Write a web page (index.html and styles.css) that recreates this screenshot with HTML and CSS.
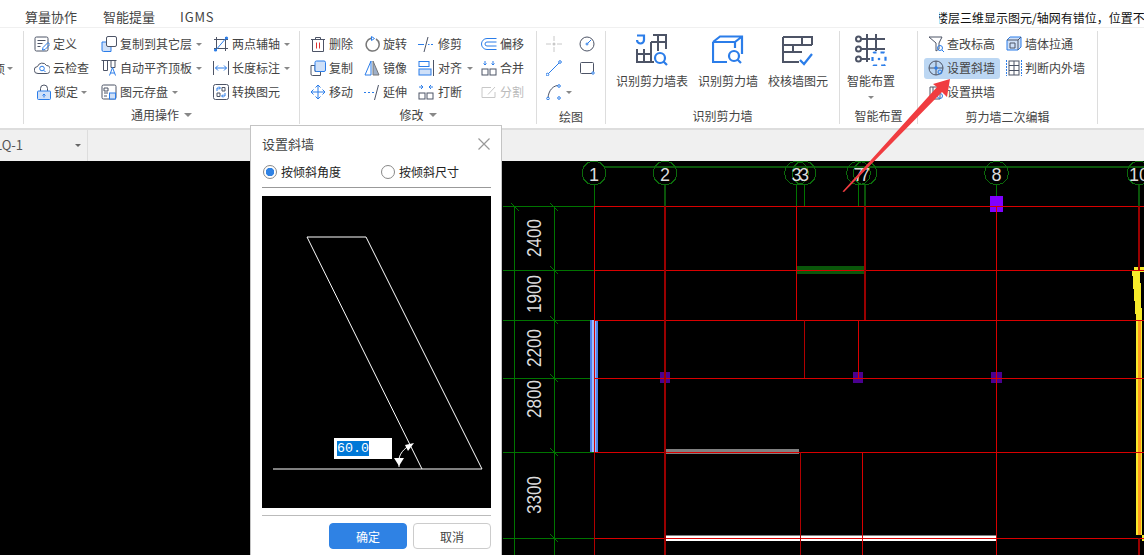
FILE: index.html
```html
<!DOCTYPE html>
<html lang="zh-CN">
<head>
<meta charset="utf-8">
<title>设置斜墙</title>
<link rel="stylesheet" href="styles.css">
</head>
<body>
<div class="app">
  <header class="menu">
    <span class="tab">算量协作</span>
    <span class="tab">智能提量</span>
    <span class="tab latin">IGMS</span>
    <div class="notice"><span>楼层三维显示图元/轴网有错位，位置不对</span></div>
  </header>

  <section class="ribbon">
    <div class="group stub">
      <div class="stub-row"><span>项</span><i class="caret"></i></div>
    </div>

    <div class="group g-common">
      <div class="tools t-common">
        <div class="item"><svg class="ic" viewBox="0 0 16 16"><rect x="1" y="1" width="13" height="14" rx="1.500"/><path d="M3.500 4.500h8M3.500 7.500h5M3.500 10.500h3"/><path class="bl" d="M8.500 14l.5-2.500 5-5 2 2-5 5z"/></svg><span>定义</span></div>
        <div class="item"><svg class="ic" viewBox="0 0 16 16"><path d="M4 13.500a3.500 3.500 0 0 1-.5-7A5 5 0 0 1 12.500 5.500a4 4 0 0 1-.5 8z"/><circle class="bl" cx="8" cy="8.500" r="2.300"/><path class="bl" d="M9.700 10.200l1.800 1.800"/></svg><span>云检查</span></div>
        <div class="item nudge"><svg class="ic" viewBox="0 0 16 16"><path d="M4.500 7V4.500a3.500 3.500 0 0 1 7 0V7"/><rect class="bl fb" x="1.500" y="7" width="13" height="8.500" rx="1"/><path class="bl" d="M8 13.500v-3M6.500 11.500L8 10l1.500 1.500"/></svg><span>锁定</span><i class="caret"></i></div>

        <div class="item"><svg class="ic" viewBox="0 0 16 16"><path class="bl fb" d="M1 6h9v9.500H2.500A1.500 1.500 0 0 1 1 14z"/><rect class="fw" x="5.500" y="0.500" width="10" height="10" rx="1.500"/></svg><span>复制到其它层</span><i class="caret"></i></div>
        <div class="item"><svg class="ic" viewBox="0 0 16 16"><path d="M0.500 0.500h15M2.500 0.500v10h4v-10M10 0.500v7h4v-7"/><path class="bl" d="M8.500 15.500l3-8 3 8M9.500 13h4"/></svg><span>自动平齐顶板</span><i class="caret"></i></div>
        <div class="item"><svg class="ic" viewBox="0 0 16 16"><rect x="1" y="1" width="14" height="14" rx="1.500"/><path d="M3 4h4v3H3zM3 9h4M3 12h3"/><rect class="bl fb" x="8.500" y="9" width="6" height="6"/></svg><span>图元存盘</span><i class="caret"></i></div>

        <div class="item"><svg class="ic" viewBox="0 0 16 16"><path d="M1 3.500h14M1 12.500h14M3.500 1v14M12.500 1v14"/><path class="bl" d="M2 15L14 1"/><circle class="dot" cx="2.500" cy="14" r="1.600"/><circle class="dot" cx="13.500" cy="2" r="1.600"/></svg><span>两点辅轴</span><i class="caret"></i></div>
        <div class="item"><svg class="ic" viewBox="0 0 16 16"><path d="M0.500 1v14M15.500 1v14"/><path class="bl" d="M2.500 8h11M5 5.500L2.500 8 5 10.500M11 5.500L13.500 8 11 10.500"/></svg><span>长度标注</span><i class="caret"></i></div>
        <div class="item"><svg class="ic" viewBox="0 0 16 16"><rect x="0.500" y="0.500" width="15" height="15" rx="2"/><path class="bl" d="M4 7V4h3M6 2.500L7.500 4 6 5.500M12 9v3H9M10 13.500L8.500 12l1.500-1.500"/><path d="M9 3.500h3V7H9zM4 9h3v3.500H4z"/></svg><span>转换图元</span></div>
      </div>
      <div class="glabel up">通用操作<i class="caret big"></i></div>
    </div>

    <div class="group g-edit">
      <div class="tools t-edit">
        <div class="item"><svg class="ic" viewBox="0 0 16 16"><path d="M1 3.500h14M5.500 3.500v-2h5v2M2.500 3.500v12h11v-12"/><path class="rd" d="M6.500 6.500v6M9.500 6.500v6"/></svg><span>删除</span></div>
        <div class="item"><svg class="ic" viewBox="0 0 16 16"><path d="M1 5.500h4v6h5.500v4H2.500A1.500 1.500 0 0 1 1 14z"/><rect class="bl fl" x="5" y="1" width="10.500" height="10.500" rx="1.500"/></svg><span>复制</span></div>
        <div class="item"><svg class="ic" viewBox="0 0 16 16"><path class="bl" d="M8 1v14M8 1L5.500 3.500M8 1l2.500 2.500M8 15l-2.500-2.500M8 15l2.500-2.500M1 8h14M1 8l2.500-2.500M1 8l2.500 2.500M15 8l-2.500-2.500M15 8l-2.500 2.500"/></svg><span>移动</span></div>

        <div class="item"><svg class="ic" viewBox="0 0 16 16"><path class="gl" d="M7 2.300A6.500 6.500 0 1 0 12 3"/><path class="bl" d="M7.500 0.500l3 2-3 2z"/></svg><span>旋转</span></div>
        <div class="item"><svg class="ic" viewBox="0 0 16 16"><path class="bl" d="M7 1L1 15h6z"/><path d="M9 1l6 14H9z" class="gf"/></svg><span>镜像</span></div>
        <div class="item"><svg class="ic" viewBox="0 0 16 16"><path class="bl" d="M0 8.500h2M4 8.500h2M8 8.500h2"/><path d="M14.500 1L10.500 16"/></svg><span>延伸</span></div>

        <div class="item gap4"><svg class="ic" viewBox="0 0 16 16"><path class="bl" d="M0 8.500h6M10 8.500h1.500M13 8.500h2"/><path d="M10 1L6 16"/></svg><span>修剪</span></div>
        <div class="item gap4"><svg class="ic" viewBox="0 0 16 16"><rect class="bl" x="1" y="1.500" width="10" height="5"/><rect class="bl fb" x="1" y="9" width="12" height="6"/><path d="M15.500 0v16"/></svg><span>对齐</span><i class="caret"></i></div>
        <div class="item gap4"><svg class="ic" viewBox="0 0 16 16"><rect x="1" y="9" width="6" height="6"/><rect x="9" y="9" width="6" height="6"/><path class="bl" d="M1 3h3.500M3 1l2 2-2 2M15 3h-3.500M13 1l-2 2 2 2"/></svg><span>打断</span></div>

        <div class="item"><svg class="ic" viewBox="0 0 16 16"><path class="bl" d="M15.500 2.500H6a5.500 5.500 0 0 0 0 11h9.500M15.500 6H6a2 2 0 0 0 0 4h9.500"/></svg><span>偏移</span></div>
        <div class="item"><svg class="ic" viewBox="0 0 16 16"><rect x="1" y="9" width="6" height="6"/><rect x="9" y="9" width="6" height="6"/><path class="bl" d="M4 1v4M2.500 3.500L4 5l1.500-1.500M12 1v4M10.500 3.500L12 5l1.500-1.500"/></svg><span>合并</span></div>
        <div class="item off"><svg class="ic" viewBox="0 0 16 16"><path class="lg" d="M10 3.500H1v10h13V8M7 10.500L14 3"/></svg><span>分割</span></div>
      </div>
      <div class="glabel up">修改<i class="caret big"></i></div>
    </div>

    <div class="group g-draw">
      <div class="tools t-draw">
        <div class="item"><svg class="ic" viewBox="0 0 16 16"><path class="lg" d="M0 8h5M11 8h5M8 0v5M8 11v5"/><circle class="lgf" cx="8" cy="8" r="1.500"/></svg></div>
        <div class="item"><svg class="ic" viewBox="0 0 16 16"><path class="bl" d="M1 15L14 2"/><circle class="bl fw" cx="1.500" cy="14.500" r="1.300"/><circle class="bl fw" cx="14" cy="2" r="1.300"/></svg></div>
        <div class="item"><svg class="ic" viewBox="0 0 16 16"><path d="M2 15C2 6 8 1 13 1.500"/><circle class="bl fw" cx="2" cy="14.500" r="1.300"/><circle class="bl fw" cx="13" cy="2" r="1.300"/><circle class="bl fw" cx="13" cy="14" r="1.300"/></svg><i class="caret"></i></div>
        <div class="item"><svg class="ic" viewBox="0 0 16 16"><circle cx="8" cy="8" r="7"/><path class="bl" d="M8 8l4-4"/><circle class="bl fw" cx="8" cy="8" r="1"/></svg></div>
        <div class="item"><svg class="ic" viewBox="0 0 16 16"><rect x="1.500" y="2.500" width="13" height="11" rx="1"/><circle class="bl fw" cx="14" cy="13" r="1.200"/></svg></div>
      </div>
      <div class="glabel">绘图</div>
    </div>

    <div class="group g-shear">
      <div class="bigs">
        <div class="big-btn"><svg class="lic" viewBox="0 0 32 32"><path d="M17 1H30V15M22 1V17M15 8H30M15 8V28M1 20H15M1 15V28H18M8 15V28"/><path class="bl2" d="M1 1.500H8V6A3.500 3.500 0 0 1 1 6"/><circle class="bl2" cx="24" cy="24" r="5"/><path class="bl2" d="M27.500 27.500L31 31"/></svg><span>识别剪力墙表</span></div>
        <div class="big-btn"><svg class="lic" viewBox="0 0 32 32"><path class="bl2" d="M1 8L8 2.500H30V20M1 8H23V14M23 8L30 2.500M1 8V28H15"/><circle class="bl2" cx="22" cy="22" r="5"/><path class="bl2" d="M25.500 25.500L29 29"/></svg><span>识别剪力墙</span></div>
        <div class="big-btn"><svg class="lic" viewBox="0 0 32 32"><path d="M1 3H30V11M1 11H30M20 3V11M11 11V18M1 18H20M1 3V28H17"/><path class="bl2" d="M18 26L22 30L30 20"/></svg><span>校核墙图元</span></div>
      </div>
      <div class="glabel">识别剪力墙</div>
    </div>

    <div class="group g-smart">
      <div class="bigs">
        <div class="big-btn"><svg class="lic" viewBox="0 0 32 32"><path d="M4 5H30M4 15H30M4 25H15M12 0V28M21 0V17"/><circle class="fw" cx="3.500" cy="5" r="2.500"/><circle class="fw" cx="3.500" cy="15" r="2.500"/><circle class="fw" cx="3.500" cy="25" r="2.500"/><rect class="bl2 dash" x="17.500" y="18.500" width="13" height="13" rx="2"/><circle class="dot" cx="24" cy="25" r="1.300"/></svg><span>智能布置</span><i class="caret lone"></i></div>
      </div>
      <div class="glabel">智能布置</div>
    </div>

    <div class="group g-second">
      <div class="tools t-second">
        <div class="item"><svg class="ic" viewBox="0 0 16 16"><path d="M1 1h13L11 7v6L8 15V7z"/><circle class="bl" cx="12" cy="12" r="2.500"/><path class="bl" d="M14 14l2 2"/></svg><span>查改标高</span></div>
        <div class="item sel"><svg class="ic" viewBox="0 0 16 16"><circle cx="8" cy="8" r="7"/><path d="M8 1v14M1 8h14"/><circle class="dot" cx="8" cy="8" r="1.700"/><circle class="bl" cx="12" cy="12" r="2"/></svg><span>设置斜墙</span></div>
        <div class="item"><svg class="ic" viewBox="0 0 16 16"><path d="M2 3h10v12H2zM5 3v12"/><circle class="bl" cx="12" cy="12" r="2.500"/></svg><span>设置拱墙</span></div>
        <div class="item"><svg class="ic" viewBox="0 0 16 16"><path class="bl fb" d="M1 4l3-3h11v10l-3 3H1z"/><path d="M1 4h11v10M12 4l3-3M4 7h5v5H4z"/></svg><span>墙体拉通</span></div>
        <div class="item"><svg class="ic" viewBox="0 0 16 16"><rect x="3" y="1" width="10" height="14"/><path d="M3 5.500h10M3 10.500h10M8 1v14"/><path class="bl dash1" d="M0.500 0v16M15.500 0v16"/></svg><span>判断内外墙</span></div>
      </div>
      <div class="glabel">剪力墙二次编辑</div>
    </div>
  </section>

  <section class="bar">
    <div class="select"><span>LQ-1</span><i class="caret dark"></i></div>
  </section>

  <main class="stage">
    <svg class="cad" viewBox="0 161 1144 394">
      <defs>
        <polygon id="bub" points="12,0 10.400,6 6,10.400 0,12 -6,10.400 -10.400,6 -12,0 -10.400,-6 -6,-10.400 0,-12 6,-10.400 10.400,-6"/>
      </defs>

      <path class="dg2" d="M605 167H1144"/>
      <g class="bubbles">
        <use href="#bub" x="594" y="173"/><use href="#bub" x="665" y="173"/>
        <use href="#bub" x="796.500" y="173"/><use href="#bub" x="804" y="173"/>
        <use href="#bub" x="858.500" y="173"/><use href="#bub" x="865" y="173"/>
        <use href="#bub" x="996.500" y="173"/><use href="#bub" x="1139" y="173"/>
      </g>
      <path class="gn" d="M594.500 185V206M796.500 185V206M804.500 185V206M858.500 185V206M996.500 185V196"/>
      <path class="dg2" d="M665 185V206M865 185V206M1139 185V206"/>

      <path class="gn" d="M514.500 206V555M554.500 206V555M503 206.500H594M503 270.500H594M503 320.500H594M503 378.500H594M503 452.500H594M503 538.500H594"/>
      <path class="gn" d="M511 203l8 8M550 203l8 8M550 266l8 8M550 316l8 8M550 374l8 8M550 448l8 8M550 534l8 8"/>

      <rect class="dgb" x="797" y="266" width="68" height="8"/>
      <rect class="bw1" x="590" y="320" width="8" height="132"/>
      <rect class="bw2" x="592" y="320" width="4" height="132"/>
      <rect class="gy" x="665" y="449" width="134" height="5"/>
      <rect class="wh" x="665" y="535" width="331" height="6"/>
      <rect class="gy" x="665" y="535" width="331" height="1"/>
      <polygon class="ye" points="1132,270 1140,270 1142,320 1142,541 1144,541 1144,535 1136,535 1136,320"/>
      <rect class="ye" x="1134" y="267" width="10" height="5"/>
      <rect class="or" x="1138" y="320" width="3" height="215"/>

      <rect class="pu" x="990" y="196" width="13" height="16"/>
      <rect class="pd" x="660" y="372" width="10" height="11"/>
      <rect class="pd" x="853" y="372" width="10" height="11"/>
      <rect class="pd" x="991" y="372" width="11" height="11"/>

      <path class="rd1" d="M594 206.500H1144M594 270.500H1144M594 320.500H1144M594 378.500H1144M594 452.500H1144M594 538.500H1144"/>
      <path class="rd1" d="M594.500 206V452M796.500 206V320M858.500 320V378M996.500 206V555M862.500 452V555"/>
      <path class="rd2" d="M594.500 452V555M804.500 320V378M800.500 452V555"/>
      <path class="rd3" d="M665 206V555M865 206V320M1139 206V270M1139 538V555"/>

      <g class="nums">
        <text x="594" y="180.500">1</text><text x="665" y="180.500">2</text>
        <text x="796.500" y="180.500">3</text><text x="804" y="180.500">3</text>
        <text x="858.500" y="180.500">7</text><text x="865" y="180.500">7</text>
        <text x="996.500" y="180.500">8</text><text x="1139" y="180.500">10</text>
      </g>
      <g class="nums dims">
        <text transform="rotate(-90 541 238)" x="541" y="238" textLength="38" lengthAdjust="spacingAndGlyphs">2400</text>
        <text transform="rotate(-90 541 294)" x="541" y="294" textLength="38" lengthAdjust="spacingAndGlyphs">1900</text>
        <text transform="rotate(-90 541 348)" x="541" y="348" textLength="38" lengthAdjust="spacingAndGlyphs">2200</text>
        <text transform="rotate(-90 541 399)" x="541" y="399" textLength="38" lengthAdjust="spacingAndGlyphs">2800</text>
        <text transform="rotate(-90 541 495)" x="541" y="495" textLength="38" lengthAdjust="spacingAndGlyphs">3300</text>
      </g>
    </svg>
  </main>

  <aside class="dialog">
    <div class="d-title"><span>设置斜墙</span>
      <svg class="d-close" viewBox="0 0 12 12"><path d="M0.500 0.500l11 11M11.500 0.500l-11 11"/></svg>
    </div>
    <div class="d-radios">
      <label class="radio r-first"><i class="dot-r on"></i><span>按倾斜角度</span></label>
      <label class="radio"><i class="dot-r"></i><span>按倾斜尺寸</span></label>
    </div>
    <div class="preview">
      <svg class="pv" viewBox="262 196 229 312">
        <path class="wl" d="M307 237H366L482 469H273M307 237L422 469"/>
        <path class="wl" d="M410 445C404 449 400 453 399 459V467"/>
        <polygon class="wf" points="414,443 405,445 408,451"/>
        <polygon class="wf" points="394,458 404,458 399,466"/>
      </svg>
      <div class="angle"><span>60.0</span></div>
    </div>
    <div class="d-actions">
      <button class="btn primary">确定</button>
      <button class="btn">取消</button>
    </div>
  </aside>

  <svg class="pointer" viewBox="0 0 1144 555">
    <polygon points="842.500,191.500 937,87 933,84 950,79 947,97 942,92 844,192"/>
  </svg>
</div>
</body>
</html>
```
FILE: styles.css
```css
* { box-sizing: border-box; }
html, body { margin: 0; height: 100%; overflow: hidden; background: #fff; }
body { font-family: "Noto Sans CJK SC", "Liberation Sans", sans-serif; font-size: 12px; color: #444; }
.app { position: relative; width: 1144px; height: 555px; overflow: hidden; display: flex; flex-direction: column; }

.menu { flex: none; height: 28px; padding: 6px 0 0 25px; display: flex; align-items: center; gap: 26px; border-bottom: 1px solid #f0f0f0; }
.tab { font-size: 13px; color: #444; line-height: 20px; }
.tab.latin { letter-spacing: 0.800px; margin-left: -1px; }
.notice { margin-left: auto; width: 205px; overflow: hidden; white-space: nowrap; color: #111; margin-top: 3px; line-height: 16px; text-indent: -3px; }

.ribbon { flex: none; height: 102px; padding: 3px 0 4px; display: flex; border-bottom: 2px solid #ddd; }
.group { flex: none; display: flex; flex-direction: column; border-right: 1px solid #ddd; }
.stub { width: 24px; overflow: hidden; }
.stub-row { height: 24px; margin-top: 25px; display: flex; align-items: center; justify-content: flex-end; gap: 1px; padding-right: 10px; }
.g-common { width: 276px; }
.g-edit { width: 237px; }
.g-draw { width: 69px; }
.g-shear { width: 234px; }
.g-smart { width: 78px; }
.g-second { width: 180px; border-right: 1px solid #ddd; }

.tools { display: grid; grid-auto-flow: column; grid-template-rows: repeat(3, 24px); margin-top: 1px; height: 72px; justify-content: start; }
.t-common { grid-template-columns: 67px 112px auto; padding-left: 10px; }
.t-edit { grid-template-columns: 54px 54px 63px auto; padding-left: 10px; }
.t-draw { grid-template-columns: 33px auto; padding-left: 9px; }
.t-second { grid-template-columns: 78px auto; padding-left: 10px; }

.item { display: flex; align-items: center; gap: 3px; white-space: nowrap; color: #444; }
.item span { margin-bottom: 2px; }
.item.gap4 { gap: 4px; }
.item.nudge { padding-left: 2px; gap: 2px; }
.item.off { color: #bbb; }
.item.sel { height: 21px; align-self: center; margin-left: -4px; padding: 0 5px 0 4px; background: #bcd7f3; border-radius: 3px; justify-self: start; }

.glabel { margin-top: 4px; height: 17px; line-height: 17px; display: flex; justify-content: center; align-items: center; gap: 4px; color: #444; }
.glabel.up { margin-top: 2px; }

.caret { flex: none; width: 0; height: 0; margin-left: 1px; border-left: 3px solid transparent; border-right: 3px solid transparent; border-top: 3px solid #888; }
.caret.big { border-left-width: 4px; border-right-width: 4px; border-top-width: 4px; }
.caret.dark { border-top-color: #666; }
.caret.lone { margin: 7px 0 0; }

.ic { flex: none; width: 16px; height: 16px; fill: none; stroke: #4d5466; stroke-width: 1; }
.lic { flex: none; width: 32px; height: 32px; fill: none; stroke: #4d5466; stroke-width: 2; }
.bl { stroke: #2b7de9; }
.bl2 { stroke: #2b7de9; stroke-width: 2.200; }
.fb { fill: #cfe0f8; }
.fl { fill: #cfe0f8; }
.fw { fill: #fff; }
.rd { stroke: #d33; }
.gl { stroke: #777; stroke-width: 1.500; }
.gf { fill: #9fb0c8; stroke: #777; }
.lg { stroke: #c8c8c8; }
.lgf { fill: #c8c8c8; stroke: none; }
.dot { fill: #2b7de9; stroke: none; }
.dash { stroke-dasharray: 4 4; stroke-dashoffset: 2; }
.dash1 { stroke-dasharray: 2 1; }

.bigs { display: flex; gap: 10px; padding-left: 10px; height: 73px; }
.g-smart .bigs { padding-left: 7px; }
.big-btn { display: flex; flex-direction: column; align-items: center; padding-top: 3px; }
.big-btn span { margin-top: 7px; line-height: 16px; white-space: nowrap; }

.bar { flex: none; height: 31px; background: #f0f0f0; display: flex; }
.select { width: 88px; border-right: 1px solid #ddd; display: flex; align-items: center; justify-content: space-between; padding-right: 6px; color: #555; font-size: 13px; }
.select span { margin: -2px 0 0 -5px; }

.stage { flex: 1; min-height: 0; background: #000; }
.cad { display: block; width: 1144px; height: 394px; }
.cad path, .cad rect, .cad polygon { shape-rendering: crispEdges; }
.bubbles { fill: none; stroke: #0b6a0b; }
.gn { fill: none; stroke: #007400; stroke-width: 1; }
.dg2 { fill: none; stroke: #0a540a; stroke-width: 2; }
.dgb { fill: #0a560a; }
.bw1 { fill: #4f80ea; }
.bw2 { fill: #9dbcff; }
.gy { fill: #808080; }
.wh { fill: #fff; }
.ye { fill: #f7ea2a; }
.or { fill: #ff9a20; }
.pu { fill: #8000ff; }
.pd { fill: #4a0090; }
.rd1 { fill: none; stroke: #d80000; stroke-width: 1; }
.rd2 { fill: none; stroke: #b00000; stroke-width: 1; }
.rd3 { fill: none; stroke: #9a0000; stroke-width: 2; }
.nums { fill: #dcdcdc; font-family: "Liberation Sans", sans-serif; font-size: 18px; text-anchor: middle; }
.dims { font-size: 20px; }

.dialog { position: absolute; left: 250px; top: 125px; width: 252px; height: 440px; background: #fff; border: 1px solid #c4c4c4; padding: 5px 10px 0 11px; }
.d-title { height: 24px; display: flex; align-items: center; justify-content: space-between; font-size: 13px; color: #444; padding-right: 1px; }
.d-close { width: 12px; height: 12px; margin-top: 1px; fill: none; stroke: #999; stroke-width: 1.200; }
.d-radios { margin-top: 5px; height: 28px; padding-bottom: 4px; display: flex; align-items: center; border-bottom: 1px solid #999; }
.radio { display: flex; align-items: center; gap: 4px; color: #222; }
.r-first { width: 119px; padding-left: 1px; }
.dot-r { width: 14px; height: 14px; border-radius: 50%; border: 1px solid #888; background: #fff; }
.dot-r.on { background: radial-gradient(circle, #2f82e4 0 4px, #fff 4.500px); }
.preview { position: relative; margin-top: 8px; width: 229px; height: 312px; background: #000; }
.pv { display: block; width: 229px; height: 312px; }
.wl { fill: none; stroke: #fff; stroke-width: 1; }
.wf { fill: #fff; }
.angle { position: absolute; left: 72px; top: 242px; width: 58px; height: 21px; background: #fff; padding-left: 3px; display: flex; align-items: center; font-family: "Liberation Mono", monospace; font-size: 13.300px; color: #fff; }
.angle span { background: #0078d7; line-height: 15px; }
.d-actions { margin-top: 7px; padding-top: 7px; border-top: 1px solid #bbb; display: flex; justify-content: flex-end; gap: 6px; }
.btn { width: 78px; height: 26px; padding: 0; border: 1px solid #ccc; border-radius: 4px; background: #fff; color: #444; font: 12px "Noto Sans CJK SC", "Liberation Sans", sans-serif; }
.btn.primary { background: #2f82e4; border-color: #2f82e4; color: #fff; }

.pointer { position: absolute; left: 0; top: 0; width: 1144px; height: 555px; fill: #f03c40; pointer-events: none; }
```
